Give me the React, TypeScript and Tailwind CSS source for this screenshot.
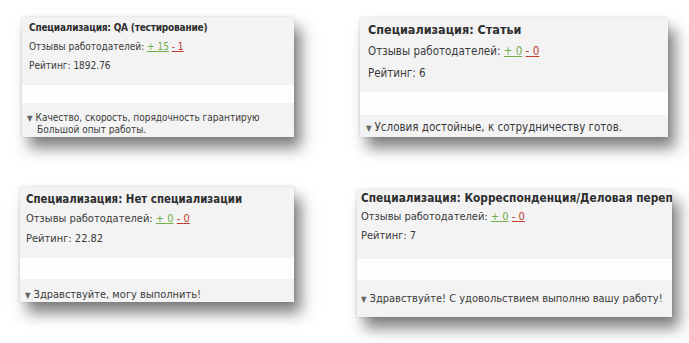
import React from 'react';

type CardProps = {
  box: string;
  top: string;
  band: string;
  bottom: string;
  text: string;
  head: string;
  title: string;
  plus: string;
  minus: string;
  rating: string;
  lines: string[];
};

const Card: React.FC<CardProps> = ({ box, top, band, bottom, text, head, title, plus, minus, rating, lines }) => (
  <div className={`flex flex-col overflow-hidden bg-[#f3f3f3] shadow-[7px_11px_14px_rgba(0,0,0,0.5),0_0_3px_rgba(0,0,0,0.15)] ${box} ${text}`}>
    <div className={`flex flex-col text-[#3a3a3a] ${top}`}>
      <div className={`font-bold whitespace-nowrap text-[#2e2e2e] ${head}`}>Специализация: {title}</div>
      <div className="whitespace-nowrap">
        Отзывы работодателей: <span className="text-[#6fae4a] underline">+ {plus}</span>{' '}
        <span className="text-[#c0392b] underline">- {minus}</span>
      </div>
      <div className="whitespace-nowrap">Рейтинг: {rating}</div>
    </div>
    <div className={`bg-[#fefefe] ${band}`} />
    <div className={`flex-1 text-[#3a3a3a] ${bottom}`}>
      {lines.map((l, i) => (
        <div key={i} className="whitespace-nowrap">
          {i === 0 ? <span className="text-[#666] text-[8px] mr-[3px]">▼</span> : <span className="inline-block w-[10px]" />}
          {l}
        </div>
      ))}
    </div>
  </div>
);

export default function App() {
  return (
    <div className="w-[689px] h-[343px] bg-white overflow-hidden font-['DejaVu_Sans',sans-serif] [font-stretch:condensed]">
      <div className="flex items-start pt-[17px] pl-[22px]">
        <Card
          box="w-[272px] h-[120px]"
          top="h-[68px] pl-[7px] pt-[3px] gap-[4px] leading-[15px]"
          band="h-[18px]"
          bottom="pl-[5px] pt-[9px] leading-[11px]"
          text="text-[10px]"
          head="tracking-[-0.2px]"
          title="QA (тестирование)"
          plus="15"
          minus="1"
          rating="1892.76"
          lines={['Качество, скорость, порядочность гарантирую', 'Большой опыт работы.']}
        />
        <Card
          box="ml-[66px] mt-[1px] w-[308px] h-[119px]"
          top="h-[74px] pl-[8px] pt-[3px] gap-[5px] leading-[17px]"
          band="h-[23px]"
          bottom="pl-[6px] pt-[6px] leading-[13px]"
          text="text-[11.5px]"
          head="text-[12.5px]"
          title="Статьи"
          plus="0"
          minus="0"
          rating="6"
          lines={['Условия достойные, к сотрудничеству готов.']}
        />
      </div>
      <div className="flex items-start pt-[50px] pl-[20px]">
        <Card
          box="w-[274px] h-[115px]"
          top="h-[72px] pl-[6px] pt-[4px] gap-[4px] leading-[16px]"
          band="h-[21px]"
          bottom="pl-[5px] pt-[10px] leading-[12px]"
          text="text-[11px]"
          head="text-[11.4px]"
          title="Нет специализации"
          plus="0"
          minus="0"
          rating="22.82"
          lines={['Здравствуйте, могу выполнить!']}
        />
        <Card
          box="ml-[63px] mt-[3px] w-[315px] h-[127px]"
          top="h-[69px] pl-[4px] pt-[0px] gap-[3px] leading-[16px]"
          band="h-[21px]"
          bottom="pl-[4px] pt-[12px] leading-[13px]"
          text="text-[11px]"
          head="text-[11.8px]"
          title="Корреспонденция/Деловая переписка"
          plus="0"
          minus="0"
          rating="7"
          lines={['Здравствуйте! С удовольствием выполню вашу работу!']}
        />
      </div>
    </div>
  );
}
